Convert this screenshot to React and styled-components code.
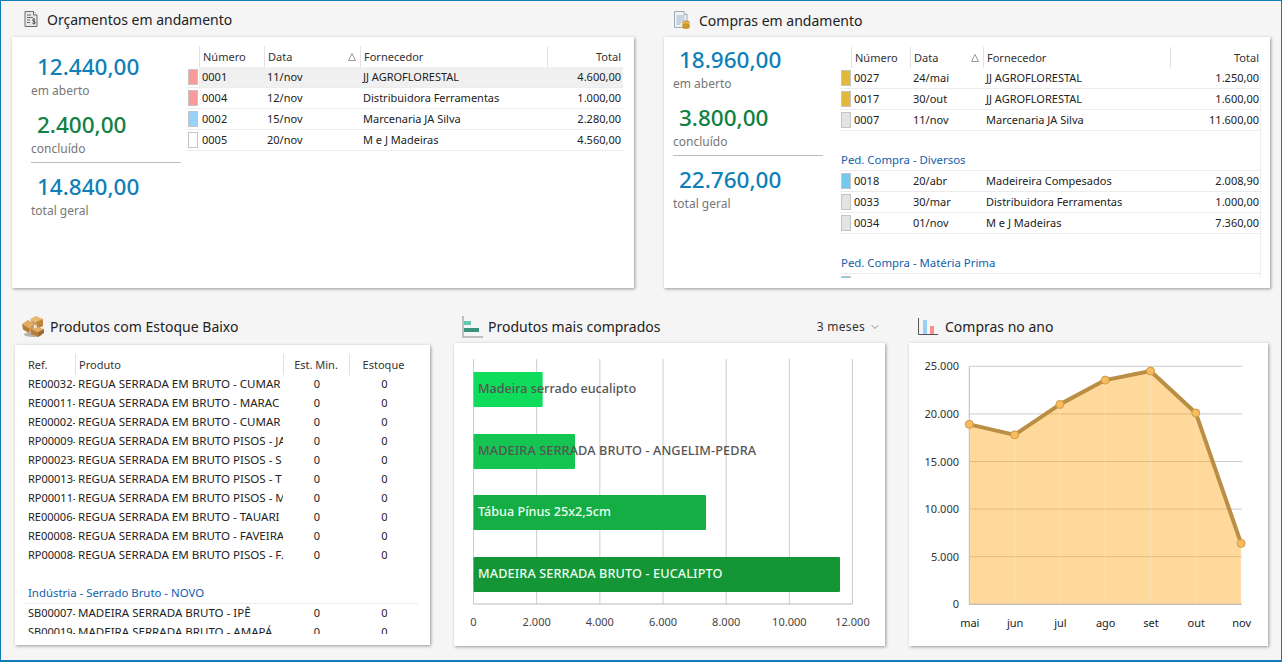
import React from 'react';
import styled, { createGlobalStyle } from 'styled-components';
import { ChevronDown } from 'lucide-react';

const FONT = "'Noto Sans', 'Open Sans', sans-serif";

const GlobalStyle = createGlobalStyle`
  html, body {
    margin: 0;
    padding: 0;
    background: #f5f5f5;
    overflow: hidden;
  }
  body {
    font-family: ${FONT};
    color: #222;
  }
`;

const Frame = styled.div`
  box-sizing: border-box;
  width: 1282px;
  height: 662px;
  background: #f5f5f5;
  border: 1px solid #117cb5;
  border-bottom-width: 2px;
  overflow: hidden;
`;

const Row = styled.div`
  display: flex;
  align-items: flex-start;
  gap: ${p => p.$gap}px;
  padding-left: ${p => p.$left}px;
  margin-top: ${p => p.$top || 0}px;
`;

const Section = styled.section`
  width: ${p => p.$width}px;
  flex: none;
`;

const Heading = styled.div`
  box-sizing: border-box;
  display: flex;
  align-items: center;
  height: ${p => p.$height}px;
  padding: ${p => p.$drop || 0}px 4px 0 ${p => p.$indent}px;
  gap: ${p => p.$gap}px;
`;

const Title = styled.h2`
  margin: 0;
  flex: 1;
  font-size: 14px;
  font-weight: 400;
  color: #222;
  white-space: nowrap;
`;

const PeriodSelect = styled.div`
  display: flex;
  align-items: center;
  gap: 4px;
  font-size: 12px;
  color: #333;
  letter-spacing: 0.3px;
`;

const Card = styled.div`
  display: flex;
  align-items: flex-start;
  box-sizing: border-box;
  height: ${p => p.$height}px;
  background: #fff;
  box-shadow: 1px 1px 3px rgba(0, 0, 0, 0.38);
  overflow: hidden;
`;

const Stats = styled.div`
  flex: none;
  width: 150px;
  margin-left: ${p => p.$left}px;
  margin-right: ${p => p.$right}px;
  padding-top: ${p => p.$top}px;
`;

const Stat = styled.div`
  margin-bottom: ${p => p.$last ? 0 : 10}px;
`;

const StatValue = styled.div`
  height: 32px;
  line-height: 32px;
  padding-left: 6px;
  font-size: 22.5px;
  font-weight: 500;
  color: ${p => p.$green ? '#0f8142' : '#0f7fb8'};
`;

const StatLabel = styled.div`
  height: 16px;
  line-height: 16px;
  font-size: 12px;
  color: #777;
`;

const StatDivider = styled.hr`
  margin: -5px 0 8px;
  border: 0;
  border-top: 1px solid #bbb;
`;

const TableWrap = styled.div`
  flex: none;
  width: ${p => p.$width}px;
  height: ${p => p.$height}px;
  margin-top: ${p => p.$top}px;
  margin-left: ${p => p.$left || 0}px;
  overflow: hidden;
`;

const GridRow = styled.div`
  display: grid;
  grid-template-columns: ${p => p.$cols};
  box-sizing: border-box;
  height: ${p => p.$height}px;
  font-size: 11px;
  color: #222;
  ${p => p.$lined && 'border-bottom: 1px solid #ececec;'}
  ${p => p.$selected && '& > *:not(:first-child) { background: #f0f0f0; }'}
`;

const HeadCell = styled.div`
  display: flex;
  align-items: center;
  justify-content: ${p => p.$center ? 'center' : p.$right ? 'flex-end' : 'space-between'};
  padding: 0 ${p => p.$right ? 2 : 4}px 0 3px;
  font-size: 11px;
  color: #333;
  white-space: nowrap;
  ${p => !p.$first && 'border-left: 1px solid #e2e2e2;'}
`;

const Cell = styled.div`
  display: flex;
  align-items: center;
  justify-content: ${p => p.$center ? 'center' : p.$right ? 'flex-end' : 'flex-start'};
  padding: 0 ${p => p.$right ? 2 : p.$wide ? 2 : 3}px 2px ${p => p.$center ? 5 : p.$right ? 2 : 3}px;
  white-space: nowrap;
  overflow: hidden;
  font-size: ${p => p.$wide ? 11.55 : 11}px;
`;

const SwatchCell = styled.div`
  display: flex;
  align-items: center;
  padding-left: 1px;
`;

const Swatch = styled.span`
  box-sizing: border-box;
  width: 10px;
  height: 16px;
  background: ${p => p.$color};
  border: 1px solid #c4c4c4;
`;

const GroupLabel = styled.div`
  box-sizing: border-box;
  display: flex;
  align-items: flex-end;
  height: ${p => p.$height}px;
  padding: 0 0 ${p => p.$bottom}px ${p => p.$left}px;
  font-size: 11.4px;
  color: #1060ad;
  border-bottom: 1px solid #ececec;
`;

const GroupBody = styled.div`
  border-right: 1px solid #efefef;
`;

const Chart = styled.svg`
  display: block;
  font-family: ${FONT};
`;

const COLS_BUDGET = '12px 65px 96px 187px 76px';
const COLS_PURCHASE = '11px 59px 73px 187px 91px';
const COLS_STOCK = '50px 208px 66px 69px';

const RED = '#fa9a9a';
const BLUE = '#96d3f7';
const CYAN = '#74c9ee';
const WHITE = '#fff';
const GOLD = '#e2b93b';
const GRAY = '#e3e3e3';

const budgets = [
  { id: '0001', date: '11/nov', name: 'JJ AGROFLORESTAL', total: '4.600,00', color: RED, selected: true },
  { id: '0004', date: '12/nov', name: 'Distribuidora Ferramentas', total: '1.000,00', color: RED },
  { id: '0002', date: '15/nov', name: 'Marcenaria JA Silva', total: '2.280,00', color: BLUE },
  { id: '0005', date: '20/nov', name: 'M e J Madeiras', total: '4.560,00', color: WHITE },
];

const purchases = [
  { id: '0027', date: '24/mai', name: 'JJ AGROFLORESTAL', total: '1.250,00', color: GOLD },
  { id: '0017', date: '30/out', name: 'JJ AGROFLORESTAL', total: '1.600,00', color: GOLD },
  { id: '0007', date: '11/nov', name: 'Marcenaria JA Silva', total: '11.600,00', color: GRAY },
];

const purchasesMisc = [
  { id: '0018', date: '20/abr', name: 'Madeireira Compesados', total: '2.008,90', color: CYAN },
  { id: '0033', date: '30/mar', name: 'Distribuidora Ferramentas', total: '1.000,00', color: GRAY },
  { id: '0034', date: '01/nov', name: 'M e J Madeiras', total: '7.360,00', color: GRAY },
];

const lowStock = [
  ['RE00032-', 'REGUA SERRADA EM BRUTO - CUMAR'],
  ['RE00011-', 'REGUA SERRADA EM BRUTO - MARAC'],
  ['RE00002-', 'REGUA SERRADA EM BRUTO - CUMAR'],
  ['RP00009-', 'REGUA SERRADA EM BRUTO PISOS - JA'],
  ['RP00023-', 'REGUA SERRADA EM BRUTO PISOS - S'],
  ['RP00013-', 'REGUA SERRADA EM BRUTO PISOS - T'],
  ['RP00011-', 'REGUA SERRADA EM BRUTO PISOS - M'],
  ['RE00006-', 'REGUA SERRADA EM BRUTO - TAUARI'],
  ['RE00008-', 'REGUA SERRADA EM BRUTO - FAVEIRA'],
  ['RP00008-', 'REGUA SERRADA EM BRUTO PISOS - F.'],
];

const lowStockNew = [
  ['SB00007-', 'MADEIRA SERRADA BRUTO - IPÊ'],
  ['SB00019-', 'MADEIRA SERRADA BRUTO - AMAPÁ'],
];

const topProducts = [
  { label: 'Madeira serrado eucalipto', value: 2190, color: '#0fdc5a', y: 29, dark: true },
  { label: 'MADEIRA SERRADA BRUTO - ANGELIM-PEDRA', value: 3214, color: '#14c552', y: 91, dark: true, caps: true },
  { label: 'Tábua Pínus 25x2,5cm', value: 7362, color: '#14ae45', y: 152 },
  { label: 'MADEIRA SERRADA BRUTO - EUCALIPTO', value: 11605, color: '#149636', y: 214, caps: true },
];

const yearly = [
  { month: 'mai', value: 18900 },
  { month: 'jun', value: 17800 },
  { month: 'jul', value: 21000 },
  { month: 'ago', value: 23550 },
  { month: 'set', value: 24500 },
  { month: 'out', value: 20100 },
  { month: 'nov', value: 6400 },
];

const BudgetIcon = () => (
  <svg width="14" height="16" viewBox="0 0 14 16">
    <path d="M1 .5h8.500L13 4v11.500H1z" fill="#e9e9e9" stroke="#6d6d6d" />
    <path d="M9.500.5V4H13" fill="#fff" stroke="#6d6d6d" />
    <path d="M3 4h4M3 6.500h6M3 9h3M3 11.500h3" stroke="#666" strokeWidth="1" />
    <path d="M11.200 8.600c-.5-.7-2.600-.8-2.600.6 0 1.500 2.800.9 2.800 2.400 0 1.400-2.300 1.300-3 .5M10 7.500v6" fill="none" stroke="#444" strokeWidth=".9" />
  </svg>
);

const PurchaseIcon = () => (
  <svg width="16" height="18" viewBox="0 0 16 18">
    <path d="M.5.5h9.500L13 3.500v13H.5z" fill="#eef1f5" stroke="#a3a9b3" />
    <path d="M10 .5v3h3" fill="#fff" stroke="#a3a9b3" />
    <path d="M2.500 5h8M2.500 7h8M2.500 9h8M2.500 11h5M2.500 13h4" stroke="#9bb3cc" />
    <ellipse cx="12" cy="11.500" rx="3.500" ry="1.500" fill="#e9b949" stroke="#9c7420" strokeWidth=".7" />
    <rect x="8.500" y="11.500" width="7" height="3" fill="#e9b949" />
    <ellipse cx="12" cy="14.500" rx="3.500" ry="1.500" fill="#e0a92f" stroke="#9c7420" strokeWidth=".7" />
    <rect x="8.500" y="14" width="7" height="2.500" fill="#d99f2a" />
    <ellipse cx="12" cy="16.500" rx="3.500" ry="1.300" fill="#c98f22" />
  </svg>
);

const BoxesIcon = () => (
  <svg width="24" height="22" viewBox="0 0 24 22">
    <ellipse cx="12" cy="18.500" rx="9" ry="2.500" fill="#b9b2a8" />
    <path d="M1 8l6-4 6 3-5 5z" fill="#e0ab5f" />
    <path d="M1 8l7 4v5L2 13.500z" fill="#b47b35" />
    <path d="M8 12l5-5v6l-5 4z" fill="#cf9a50" />
    <path d="M9 3l6-3 7 3-6 3z" fill="#e8b873" />
    <path d="M15 6l7-3v7l-6 3z" fill="#c08539" />
    <path d="M9 3l6 3v4l-3-2z" fill="#d39d55" />
    <path d="M10 13l7-2 6 2-6 3z" fill="#e2b06a" />
    <path d="M10 13l7 3v5l-7-3z" fill="#b77f38" />
    <path d="M17 16l6-3v4l-6 4z" fill="#9d6a2b" />
  </svg>
);

const BarsIcon = () => (
  <svg width="21" height="22" viewBox="0 0 21 22">
    <path d="M1 0v21h20" fill="none" stroke="#a9b0ad" strokeWidth="1.500" />
    <rect x="2" y="5" width="7" height="4" fill="#62c7b3" />
    <rect x="2" y="12" width="15" height="4" fill="#3b9278" />
  </svg>
);

const YearIcon = () => (
  <svg width="20" height="17" viewBox="0 0 20 17">
    <path d="M.5 0v16.500H20" fill="none" stroke="#555" />
    <rect x="5" y="2" width="4" height="14" fill="#98d0f5" />
    <rect x="12" y="8" width="4" height="8" fill="#f98f8f" />
  </svg>
);

const SortTriangle = () => (
  <svg width="8" height="8" viewBox="0 0 8 8">
    <path d="M4 .5L7.500 7.500H.5z" fill="none" stroke="#999" />
  </svg>
);

const OrderHeader = ({ cols }) => (
  <GridRow $cols={cols} $height={21}>
    <HeadCell $first />
    <HeadCell>Número</HeadCell>
    <HeadCell>
      Data
      <SortTriangle />
    </HeadCell>
    <HeadCell>Fornecedor</HeadCell>
    <HeadCell $right>Total</HeadCell>
  </GridRow>
);

const OrderRow = ({ cols, order }) => (
  <GridRow $cols={cols} $height={21} $lined $selected={order.selected}>
    <SwatchCell>
      <Swatch $color={order.color} />
    </SwatchCell>
    <Cell>{order.id}</Cell>
    <Cell>{order.date}</Cell>
    <Cell>{order.name}</Cell>
    <Cell $right>{order.total}</Cell>
  </GridRow>
);

const StatBlock = ({ open, done, total, left, right, top }) => (
  <Stats $left={left} $right={right} $top={top}>
    <Stat>
      <StatValue>{open}</StatValue>
      <StatLabel>em aberto</StatLabel>
    </Stat>
    <Stat>
      <StatValue $green>{done}</StatValue>
      <StatLabel>concluído</StatLabel>
    </Stat>
    <StatDivider />
    <Stat $last>
      <StatValue>{total}</StatValue>
      <StatLabel>total geral</StatLabel>
    </Stat>
  </Stats>
);

const StockRow = ({ item }) => (
  <GridRow $cols={COLS_STOCK} $height={19}>
    <Cell>{item[0]}</Cell>
    <Cell $wide>{item[1]}</Cell>
    <Cell $center>0</Cell>
    <Cell $center>0</Cell>
  </GridRow>
);

const TopProductsChart = () => {
  const x0 = 19.5;
  const scale = 379 / 12000;
  const ticks = [0, 2000, 4000, 6000, 8000, 10000, 12000];

  return (
    <Chart width="431" height="303" viewBox="0 0 431 303">
      {ticks.map(tick => (
        <line key={tick} x1={x0 + tick * scale} x2={x0 + tick * scale} y1="16" y2="261" stroke="#ccc" />
      ))}
      <line x1={x0} x2={x0 + 12000 * scale} y1="261" y2="261" stroke="#bbb" />
      {topProducts.map(bar => (
        <g key={bar.label}>
          <rect x={x0} y={bar.y} width={bar.value * scale} height="35" rx="1" fill={bar.color} />
          <text
            x="24"
            y={bar.y + 21}
            fontSize={bar.caps ? 12.7 : 12.6}
            fontWeight="500"
            letterSpacing={bar.caps ? 0.1 : 0}
            fill={bar.dark ? '#555' : '#eafff0'}
          >
            {bar.label}
          </text>
        </g>
      ))}
      {ticks.map(tick => (
        <text key={tick} x={x0 + tick * scale} y="283" fontSize="11" fill="#444" textAnchor="middle">
          {tick ? tick.toLocaleString('pt-BR') : '0'}
        </text>
      ))}
    </Chart>
  );
};

const YearChart = () => {
  const x = i => 60.3 + i * 45.3;
  const y = v => 261.3 - v * 0.00952;
  const ticks = [0, 5000, 10000, 15000, 20000, 25000];
  const line = yearly.map((p, i) => `${x(i)},${y(p.value)}`).join(' ');
  const area = `${x(0)},${y(0)} ${line} ${x(6)},${y(0)}`;

  return (
    <Chart width="359" height="303" viewBox="0 0 359 303">
      {ticks.map(tick => (
        <line key={tick} x1={x(0)} x2="333" y1={y(tick)} y2={y(tick)} stroke="#ccc" />
      ))}
      <polygon points={area} fill="rgb(255, 165, 20)" fillOpacity="0.42" />
      {yearly.map((p, i) => (
        <line key={p.month} x1={x(i)} x2={x(i)} y1={y(p.value)} y2={y(0)} stroke="#fff" strokeOpacity="0.22" />
      ))}
      <line x1={x(0)} x2={x(0)} y1={y(25000)} y2={y(0)} stroke="#bbb" />
      <line x1={x(0)} x2="333" y1={y(0)} y2={y(0)} stroke="#bbb" />
      <polyline points={line} fill="none" stroke="#ba8f45" strokeWidth="4" strokeLinejoin="round" />
      {yearly.map((p, i) => (
        <circle key={p.month} cx={x(i)} cy={y(p.value)} r="4" fill="#f8bb5e" stroke="#d19a45" />
      ))}
      {ticks.map(tick => (
        <text key={tick} x="50" y={y(tick) + 4} fontSize="11" fill="#333" textAnchor="end">
          {tick ? tick.toLocaleString('pt-BR') : '0'}
        </text>
      ))}
      {yearly.map((p, i) => (
        <text key={p.month} x={x(i) + 0.5} y="284" fontSize="11" fill="#222" textAnchor="middle">
          {p.month}
        </text>
      ))}
    </Chart>
  );
};

const App = () => (
  <Frame>
    <GlobalStyle />
    <Row $left={11} $gap={30}>
      <Section $width={622}>
        <Heading $height={36} $indent={12} $gap={9}>
          <BudgetIcon />
          <Title>Orçamentos em andamento</Title>
        </Heading>
        <Card $height={251}>
          <StatBlock open="12.440,00" done="2.400,00" total="14.840,00" left={19} right={6} top={14} />
          <TableWrap $width={436} $top={9} $height={240}>
            <OrderHeader cols={COLS_BUDGET} />
            {budgets.map(order => (
              <OrderRow key={order.id} cols={COLS_BUDGET} order={order} />
            ))}
          </TableWrap>
        </Card>
      </Section>
      <Section $width={606}>
        <Heading $height={36} $drop={2} $indent={10} $gap={9}>
          <PurchaseIcon />
          <Title>Compras em andamento</Title>
        </Heading>
        <Card $height={251}>
          <StatBlock open="18.960,00" done="3.800,00" total="22.760,00" left={9} right={17} top={7} />
          <TableWrap $width={421} $top={10} $height={231}>
            <OrderHeader cols={COLS_PURCHASE} />
            <GroupBody>
              {purchases.map(order => (
                <OrderRow key={order.id} cols={COLS_PURCHASE} order={order} />
              ))}
              <GroupLabel $height={40} $left={1} $bottom={3}>Ped. Compra - Diversos</GroupLabel>
              {purchasesMisc.map(order => (
                <OrderRow key={order.id} cols={COLS_PURCHASE} order={order} />
              ))}
              <GroupLabel $height={40} $left={1} $bottom={3}>Ped. Compra - Matéria Prima</GroupLabel>
              <OrderRow
                cols={COLS_PURCHASE}
                order={{ id: '', date: '', name: '', total: '', color: CYAN }}
              />
            </GroupBody>
          </TableWrap>
        </Card>
      </Section>
    </Row>
    <Row $left={14} $gap={24} $top={20}>
      <Section $width={415}>
        <Heading $height={37} $indent={6} $gap={5}>
          <BoxesIcon />
          <Title>Produtos com Estoque Baixo</Title>
        </Heading>
        <Card $height={300}>
          <TableWrap $width={393} $left={10} $top={9} $height={280}>
            <GridRow $cols={COLS_STOCK} $height={21}>
              <HeadCell $first>Ref.</HeadCell>
              <HeadCell>Produto</HeadCell>
              <HeadCell $center>Est. Min.</HeadCell>
              <HeadCell $center>Estoque</HeadCell>
            </GridRow>
            {lowStock.map(item => (
              <StockRow key={item[0]} item={item} />
            ))}
            <GroupLabel $height={39} $left={3} $bottom={3}>Indústria - Serrado Bruto - NOVO</GroupLabel>
            {lowStockNew.map(item => (
              <StockRow key={item[0]} item={item} />
            ))}
          </TableWrap>
        </Card>
      </Section>
      <Section $width={431}>
        <Heading $height={35} $drop={2} $indent={8} $gap={5}>
          <BarsIcon />
          <Title>Produtos mais comprados</Title>
          <PeriodSelect>
            3 meses
            <ChevronDown size={12} color="#666" strokeWidth={1.5} />
          </PeriodSelect>
        </Heading>
        <Card $height={303}>
          <TopProductsChart />
        </Card>
      </Section>
      <Section $width={359}>
        <Heading $height={35} $drop={2} $indent={9} $gap={7}>
          <YearIcon />
          <Title>Compras no ano</Title>
        </Heading>
        <Card $height={303}>
          <YearChart />
        </Card>
      </Section>
    </Row>
  </Frame>
);

export default App;
